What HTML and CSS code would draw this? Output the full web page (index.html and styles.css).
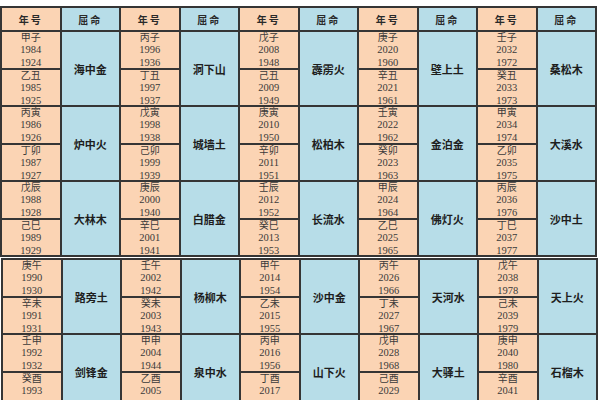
FILE: index.html
```html
<!DOCTYPE html>
<html lang="zh-CN">
<head>
<meta charset="utf-8">
<title>纳音表</title>
<link rel="stylesheet" href="styles.css">
</head>
<body>
<div class="sheet">
  <div class="tbl top">
    <div class="h ph">年号</div><div class="h bl">屈命</div>
    <div class="h ph">年号</div><div class="h bl">屈命</div>
    <div class="h ph">年号</div><div class="h bl">屈命</div>
    <div class="h ph">年号</div><div class="h bl">屈命</div>
    <div class="h ph">年号</div><div class="h bl">屈命</div>

    <div class="y"><span>甲子</span><span>1984</span><span>1924</span></div><div class="n">海中金</div>
    <div class="y"><span>丙子</span><span>1996</span><span>1936</span></div><div class="n">洞下山</div>
    <div class="y"><span>戊子</span><span>2008</span><span>1948</span></div><div class="n">霹雳火</div>
    <div class="y"><span>庚子</span><span>2020</span><span>1960</span></div><div class="n">壁上土</div>
    <div class="y"><span>壬子</span><span>2032</span><span>1972</span></div><div class="n">桑松木</div>
    <div class="y"><span>乙丑</span><span>1985</span><span>1925</span></div>
    <div class="y"><span>丁丑</span><span>1997</span><span>1937</span></div>
    <div class="y"><span>己丑</span><span>2009</span><span>1949</span></div>
    <div class="y"><span>辛丑</span><span>2021</span><span>1961</span></div>
    <div class="y"><span>癸丑</span><span>2033</span><span>1973</span></div>

    <div class="y"><span>丙寅</span><span>1986</span><span>1926</span></div><div class="n">炉中火</div>
    <div class="y"><span>戊寅</span><span>1998</span><span>1938</span></div><div class="n">城墙土</div>
    <div class="y"><span>庚寅</span><span>2010</span><span>1950</span></div><div class="n">松柏木</div>
    <div class="y"><span>壬寅</span><span>2022</span><span>1962</span></div><div class="n">金泊金</div>
    <div class="y"><span>甲寅</span><span>2034</span><span>1974</span></div><div class="n">大溪水</div>
    <div class="y"><span>丁卯</span><span>1987</span><span>1927</span></div>
    <div class="y"><span>己卯</span><span>1999</span><span>1939</span></div>
    <div class="y"><span>辛卯</span><span>2011</span><span>1951</span></div>
    <div class="y"><span>癸卯</span><span>2023</span><span>1963</span></div>
    <div class="y"><span>乙卯</span><span>2035</span><span>1975</span></div>

    <div class="y"><span>戊辰</span><span>1988</span><span>1928</span></div><div class="n">大林木</div>
    <div class="y"><span>庚辰</span><span>2000</span><span>1940</span></div><div class="n">白腊金</div>
    <div class="y"><span>壬辰</span><span>2012</span><span>1952</span></div><div class="n">长流水</div>
    <div class="y"><span>甲辰</span><span>2024</span><span>1964</span></div><div class="n">佛灯火</div>
    <div class="y"><span>丙辰</span><span>2036</span><span>1976</span></div><div class="n">沙中土</div>
    <div class="y"><span>己巳</span><span>1989</span><span>1929</span></div>
    <div class="y"><span>辛巳</span><span>2001</span><span>1941</span></div>
    <div class="y"><span>癸巳</span><span>2013</span><span>1953</span></div>
    <div class="y"><span>乙巳</span><span>2025</span><span>1965</span></div>
    <div class="y"><span>丁巳</span><span>2037</span><span>1977</span></div>
  </div>

  <div class="tbl bottom">
    <div class="y"><span>庚午</span><span>1990</span><span>1930</span></div><div class="n">路旁土</div>
    <div class="y"><span>壬午</span><span>2002</span><span>1942</span></div><div class="n">杨柳木</div>
    <div class="y"><span>甲午</span><span>2014</span><span>1954</span></div><div class="n">沙中金</div>
    <div class="y"><span>丙午</span><span>2026</span><span>1966</span></div><div class="n">天河水</div>
    <div class="y"><span>戊午</span><span>2038</span><span>1978</span></div><div class="n">天上火</div>
    <div class="y"><span>辛未</span><span>1991</span><span>1931</span></div>
    <div class="y"><span>癸未</span><span>2003</span><span>1943</span></div>
    <div class="y"><span>乙未</span><span>2015</span><span>1955</span></div>
    <div class="y"><span>丁未</span><span>2027</span><span>1967</span></div>
    <div class="y"><span>己未</span><span>2039</span><span>1979</span></div>

    <div class="y"><span>壬申</span><span>1992</span><span>1932</span></div><div class="n">剑锋金</div>
    <div class="y"><span>甲申</span><span>2004</span><span>1944</span></div><div class="n">泉中水</div>
    <div class="y"><span>丙申</span><span>2016</span><span>1956</span></div><div class="n">山下火</div>
    <div class="y"><span>戊申</span><span>2028</span><span>1968</span></div><div class="n">大驿土</div>
    <div class="y"><span>庚申</span><span>2040</span><span>1980</span></div><div class="n">石榴木</div>
    <div class="y"><span>癸酉</span><span>1993</span><span>1933</span></div>
    <div class="y"><span>乙酉</span><span>2005</span><span>1945</span></div>
    <div class="y"><span>丁酉</span><span>2017</span><span>1957</span></div>
    <div class="y"><span>己酉</span><span>2029</span><span>1969</span></div>
    <div class="y"><span>辛酉</span><span>2041</span><span>1981</span></div>
  </div>
</div>
</body>
</html>
```

FILE: styles.css
```css
html, body {
  margin: 0;
  padding: 0;
  background: #ffffff;
}
body {
  width: 600px;
  height: 400px;
  overflow: hidden;
  font-family: "Liberation Serif", "Noto Sans CJK SC", serif;
  color: #333333;
}
.sheet {
  padding-top: 6px;
}
.tbl {
  display: grid;
  grid-template-columns: repeat(10, 1fr);
  grid-auto-rows: 35.5px;
  gap: 2px;
  padding: 2px;
  background: #353535;
  width: 597px;
  box-sizing: border-box;
}
.tbl.top {
  grid-template-rows: 22px;
}
.tbl.bottom {
  margin-top: 1px;
  margin-left: 1px;
}
.ph {
  background: #fbd4b4;
}
.bl {
  background: #b7dde8;
}
.h {
  display: flex;
  align-items: center;
  justify-content: center;
  font-family: "Noto Sans CJK SC", sans-serif;
  font-weight: 700;
  font-size: 10px;
  letter-spacing: 2px;
  color: #2a2a2a;
}
.y {
  background: #fbd4b4;
  display: flex;
  flex-direction: column;
  align-items: center;
  justify-content: center;
  font-size: 10.5px;
  line-height: 13px;
  color: #3a3a3a;
}
.y span:first-child {
  font-family: "Noto Sans CJK SC", sans-serif;
  font-size: 10px;
}
.n {
  grid-row: span 2;
  background: #b7dde8;
  display: flex;
  align-items: center;
  justify-content: center;
  font-family: "Noto Sans CJK SC", sans-serif;
  font-weight: 700;
  font-size: 11px;
  color: #1e1e1e;
}
```
